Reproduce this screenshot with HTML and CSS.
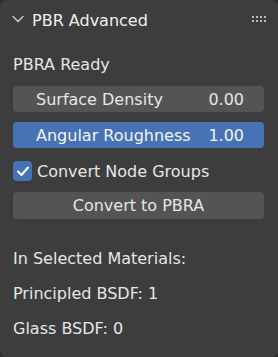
FILE: index.html
```html
<!DOCTYPE html>
<html>
<head>
<meta charset="utf-8">
<link rel="stylesheet" href="styles.css">
</head>
<body>
<div class="panel">
  <div class="header">
    <svg class="chevron" width="12" height="8" viewBox="0 0 12 8"><path d="M1 1.5 L6 6.5 L11 1.5" fill="none" stroke="#cfcfcf" stroke-width="1.4" stroke-linecap="round" stroke-linejoin="round"/></svg>
    <span class="title">PBR Advanced</span>
    <svg class="grip" width="14" height="7" viewBox="0 0 14 7">
      <g fill="#bdbdbd">
        <rect x="0" y="0" width="2" height="2"/><rect x="4" y="0" width="2" height="2"/><rect x="8" y="0" width="2" height="2"/><rect x="12" y="0" width="2" height="2"/>
        <rect x="0" y="4" width="2" height="2"/><rect x="4" y="4" width="2" height="2"/><rect x="8" y="4" width="2" height="2"/><rect x="12" y="4" width="2" height="2"/>
      </g>
    </svg>
  </div>
  <div class="body">
    <div class="label status">PBRA Ready</div>
    <div class="field"><span>Surface Density</span><span>0.00</span></div>
    <div class="field active"><span>Angular Roughness</span><span>1.00</span></div>
    <div class="check">
      <span class="box"><svg width="14" height="12" viewBox="0 0 14 12"><path d="M2 6.5 L5.5 10 L12 2.5" fill="none" stroke="#fff" stroke-width="2" stroke-linecap="round" stroke-linejoin="round"/></svg></span>
      <span>Convert Node Groups</span>
    </div>
    <div class="button">Convert to PBRA</div>
    <div class="label info">In Selected Materials:</div>
    <div class="label info">Principled BSDF: 1</div>
    <div class="label info">Glass BSDF: 0</div>
  </div>
</div>
</body>
</html>
```

FILE: styles.css
```css
html, body {
  margin: 0;
  padding: 0;
  background: #2b2b2b;
}
body {
  width: 278px;
  height: 357px;
  overflow: hidden;
  font-family: "DejaVu Sans", sans-serif;
  font-size: 16px;
  color: #e6e6e6;
}
.panel {
  width: 278px;
  height: 357px;
  background: #3d3d3d;
  border-radius: 6px;
  box-sizing: border-box;
}
.header {
  height: 40px;
  display: flex;
  align-items: center;
  padding: 0 12px 0 12px;
}
.chevron {
  margin-right: 8px;
  margin-top: -2px;
}
.title {
  flex: 1;
  color: #f0f0f0;
  font-size: 16px;
}
.grip {
  margin-top: -2px;
}
.body {
  padding: 0 14px 0 13px;
  display: flex;
  flex-direction: column;
}
.label {
  height: 36px;
  display: flex;
  align-items: center;
}
.status {
  height: 44px;
  margin-top: 2px;
  align-items: center;
  padding-bottom: 0;
}
.field {
  height: 26px;
  border-radius: 4px;
  background: #545454;
  display: flex;
  align-items: center;
  justify-content: space-between;
  padding: 0 20px 0 23px;
  margin-bottom: 10px;
}
.field.active {
  background: #4772b3;
  color: #f2f2f2;
}
.check {
  display: flex;
  align-items: center;
  height: 22px;
  margin-top: 2px;
  margin-bottom: 10px;
}
.box {
  width: 19px;
  height: 20px;
  border-radius: 4px;
  background: #4772b3;
  display: flex;
  align-items: center;
  justify-content: center;
  margin-right: 5px;
}
.button {
  height: 27px;
  border-radius: 4px;
  background: #545454;
  display: flex;
  align-items: center;
  justify-content: center;
  margin-bottom: 22px;
}
.info {
  height: 35px;
}
```
